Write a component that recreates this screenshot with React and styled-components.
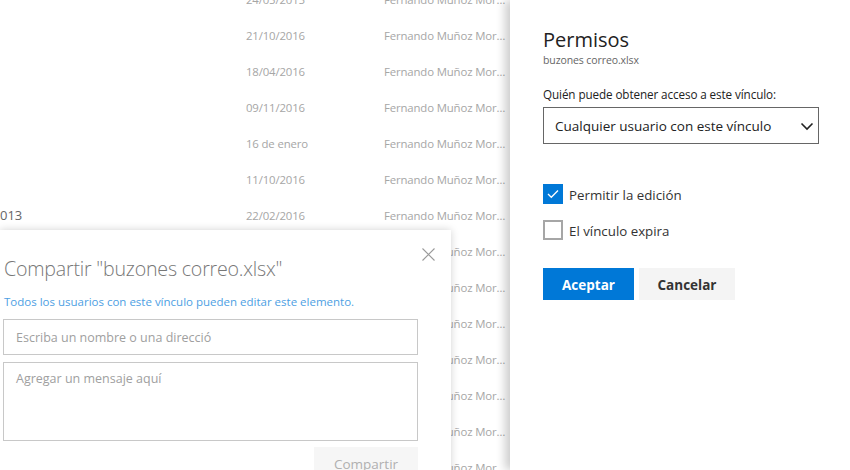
import React from "react";
import styled, { createGlobalStyle } from "styled-components";

const Global = createGlobalStyle`
  html, body { margin: 0; padding: 0; background: #fff; }
  body { font-family: "Open Sans", "Noto Sans", sans-serif; }
  * { box-sizing: border-box; }
`;

const Page = styled.div`
  position: relative;
  width: 850px;
  height: 470px;
  overflow: hidden;
  background: #fff;
`;

const FileList = styled.div`
  display: flex;
  flex-direction: column;
  margin-top: -19px;
`;

const Row = styled.div`
  display: grid;
  grid-template-columns: 246px 138px 124px;
  height: 36px;
  align-items: center;
  white-space: nowrap;
`;

const Cell = styled.span`
  overflow: hidden;
  text-overflow: ellipsis;
  color: ${(p) => (p.$dark ? "#666" : "#a6a6a6")};
  font-size: ${(p) => (p.$big ? "13px" : "11.4px")};
  letter-spacing: ${(p) => (p.$big ? "0" : "-0.15px")};
`;

const SidePanel = styled.aside`
  position: absolute;
  top: 0;
  right: 0;
  bottom: 0;
  width: 340px;
  background: #fff;
  box-shadow: -5px 0 9px rgba(0, 0, 0, 0.2);
  padding: 26px 31px 0 33px;
  display: flex;
  flex-direction: column;
  color: #333;
`;

const PanelTitle = styled.h2`
  margin: 0;
  font-size: 20px;
  font-weight: 400;
  line-height: 28px;
  color: #222;
`;

const PanelSub = styled.div`
  font-size: 10.5px;
  color: #666;
  line-height: 14px;
  margin-top: -1px;
  letter-spacing: -0.1px;
`;

const FieldLabel = styled.div`
  font-size: 11.7px;
  color: #222;
  margin-top: 18px;
  line-height: 18px;
  letter-spacing: -0.1px;
`;

const SelectBox = styled.div`
  margin-top: 4px;
  height: 37px;
  border: 1px solid #666;
  display: flex;
  align-items: center;
  justify-content: space-between;
  padding: 0 3px 0 11px;
  font-size: 13.5px;
  color: #222;
`;

const CheckList = styled.div`
  display: flex;
  flex-direction: column;
  gap: 16px;
  margin-top: 40px;
`;

const CheckRow = styled.label`
  display: flex;
  align-items: flex-start;
  gap: 6px;
  height: 20px;
  font-size: 13.3px;
  color: #333;
  line-height: 20px;
`;

const CheckText = styled.span`
  padding-top: 1px;
`;

const Box = styled.span`
  width: 20px;
  height: 20px;
  flex: none;
  display: inline-flex;
  align-items: center;
  justify-content: center;
  background: ${(p) => (p.$checked ? "#0078d7" : "#fff")};
  border: ${(p) => (p.$checked ? "none" : "2px solid #a6a6a6")};
`;

const Actions = styled.div`
  display: flex;
  gap: 5px;
  margin-top: 28px;
`;

const Btn = styled.button`
  height: 32px;
  width: ${(p) => p.$w}px;
  border: none;
  font-family: inherit;
  font-size: 13.5px;
  font-weight: 700;
  background: ${(p) => (p.$primary ? "#0078d7" : "#f4f4f4")};
  color: ${(p) => (p.$primary ? "#fff" : "#333")};
  padding: 2px 0 0;
`;

const ShareDialog = styled.section`
  position: absolute;
  left: 0;
  top: 230px;
  width: 451px;
  height: 260px;
  background: #fff;
  box-shadow: 0 0 8px rgba(0, 0, 0, 0.18);
  padding: 0 33px 0 3px;
  display: flex;
  flex-direction: column;
`;

const DialogHead = styled.div`
  display: flex;
  justify-content: space-between;
  align-items: flex-start;
`;

const DialogTitle = styled.h2`
  margin: 24px 0 0 1px;
  font-size: 19.6px;
  font-weight: 300;
  color: #777;
  line-height: 30px;
  letter-spacing: -0.2px;
`;

const CloseBtn = styled.span`
  margin-top: 18px;
  margin-right: -17px;
  width: 13px;
  height: 13px;
  display: inline-flex;
`;

const Notice = styled.div`
  margin: 10px 0 0 1px;
  font-size: 11.5px;
  color: #4da0e3;
  line-height: 16px;
`;

const Input = styled.div`
  margin-top: 9px;
  height: 36px;
  border: 1px solid #c8c8c8;
  display: flex;
  align-items: center;
  padding-left: 12px;
  font-size: 12.5px;
  color: #a0a0a0;
`;

const TextArea = styled.div`
  margin-top: 7px;
  height: 79px;
  border: 1px solid #c8c8c8;
  padding: 7px 12px;
  font-size: 12.5px;
  color: #a0a0a0;
  line-height: 18px;
`;

const DialogFooter = styled.div`
  display: flex;
  justify-content: flex-end;
  margin-top: 6px;
`;

const ShareBtn = styled.button`
  width: 104px;
  height: 32px;
  border: none;
  background: #f6f6f6;
  color: #b0b0b0;
  font-family: inherit;
  font-size: 13.5px;
  padding: 0;
  padding-top: 2px;
`;

const rows = [
  ["", "24/05/2015"],
  ["", "21/10/2016"],
  ["", "18/04/2016"],
  ["", "09/11/2016"],
  ["", "16 de enero"],
  ["", "11/10/2016"],
  ["013", "22/02/2016"],
  ["", "14/03/2016"],
  ["", "02/06/2016"],
  ["", "27/09/2016"],
  ["", "05/12/2016"],
  ["", "19/01/2017"],
  ["", "30/11/2016"],
  ["", "08/07/2016"],
];

export default function App() {
  return (
    <>
      <Global />
      <Page>
        <FileList>
          {rows.map(([a, d], i) => (
            <Row key={i}>
              <Cell $dark $big>{a}</Cell>
              <Cell>{d}</Cell>
              <Cell>Fernando Muñoz Moreno</Cell>
            </Row>
          ))}
        </FileList>

        <ShareDialog>
          <DialogHead>
            <DialogTitle>Compartir "buzones correo.xlsx"</DialogTitle>
            <CloseBtn>
              <svg width="13" height="13" viewBox="0 0 13 13">
                <path d="M0.5 0.5 L12.5 12.5 M12.5 0.5 L0.5 12.5" stroke="#9a9a9a" strokeWidth="1.1" />
              </svg>
            </CloseBtn>
          </DialogHead>
          <Notice>Todos los usuarios con este vínculo pueden editar este elemento.</Notice>
          <Input>Escriba un nombre o una direcció</Input>
          <TextArea>Agregar un mensaje aquí</TextArea>
          <DialogFooter>
            <ShareBtn>Compartir</ShareBtn>
          </DialogFooter>
        </ShareDialog>

        <SidePanel>
          <PanelTitle>Permisos</PanelTitle>
          <PanelSub>buzones correo.xlsx</PanelSub>
          <FieldLabel>Quién puede obtener acceso a este vínculo:</FieldLabel>
          <SelectBox>
            <span>Cualquier usuario con este vínculo</span>
            <svg width="16" height="16" viewBox="0 0 16 16">
              <path d="M2.5 5.5 L8 11 L13.5 5.5" fill="none" stroke="#222" strokeWidth="1.6" />
            </svg>
          </SelectBox>
          <CheckList>
            <CheckRow>
              <Box $checked>
                <svg width="12" height="10" viewBox="0 0 12 10">
                  <path d="M1 5 L4.3 8.3 L11 1.5" fill="none" stroke="#fff" strokeWidth="1.3" />
                </svg>
              </Box>
              <CheckText>Permitir la edición</CheckText>
            </CheckRow>
            <CheckRow>
              <Box />
              <CheckText>El vínculo expira</CheckText>
            </CheckRow>
          </CheckList>
          <Actions>
            <Btn $primary $w={91}>Aceptar</Btn>
            <Btn $w={96}>Cancelar</Btn>
          </Actions>
        </SidePanel>
      </Page>
    </>
  );
}
